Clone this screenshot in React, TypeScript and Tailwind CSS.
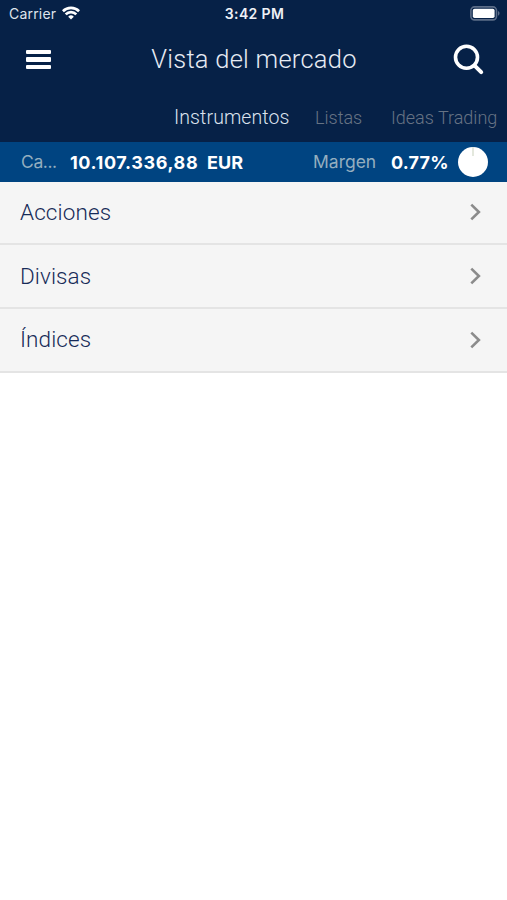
const instruments = ["Acciones", "Divisas", "Índices"];

function StatusBar() {
  return (
    <div className="grid h-[26px] grid-cols-3 items-center pl-[9px] pr-[7px] text-white">
      <div className="flex items-center gap-[6px]">
        <span className="text-[14px] tracking-[0.2px] text-[#dfe4ec]">Carrier</span>
        <svg width="18" height="14" viewBox="0 0 18 14" fill="none" stroke="currentColor" strokeWidth="2.7">
          <path d="M.9 5.2a11.5 11.5 0 0 1 16.2 0" />
          <path d="M3.7 8.4a7.5 7.5 0 0 1 10.6 0" />
          <path d="M9 13.6 6.2 10.7a4 4 0 0 1 5.6 0Z" fill="currentColor" stroke="none" />
        </svg>
      </div>
      <span className="text-center text-[14px] font-semibold tracking-[0.35px] text-[#eef1f6]">
        3:42 PM
      </span>
      <svg className="justify-self-end" width="30" height="15" viewBox="0 0 30 15" fill="none">
        <rect x=".9" y=".9" width="25.6" height="13" rx="3.6" stroke="#5c6d88" strokeWidth="1.6" />
        <rect x="2.8" y="2.7" width="21.8" height="9.4" rx="1.8" fill="#fff" />
        <path d="M28 5.1c2 .8 2 3.8 0 4.6Z" fill="#5c6d88" />
      </svg>
    </div>
  );
}

export default function App() {
  return (
    <div className="h-[900px] w-[507px] overflow-hidden bg-white font-['Inter',sans-serif]">
      <header className="h-[142px] bg-[#062147]">
        <StatusBar />

        <div className="flex h-[67px] items-center justify-between pl-[26px] pr-[22px]">
          <button className="flex w-[29px] flex-col gap-[3px]">
            <span className="h-[4.5px] w-[25px] rounded-[1px] bg-white" />
            <span className="h-[4.5px] w-[25px] rounded-[1px] bg-white" />
            <span className="h-[4.5px] w-[25px] rounded-[1px] bg-white" />
          </button>
          <h1 className="font-['Roboto',sans-serif] text-[25.5px] font-light tracking-[0.25px] text-[#e6ebf3]">
            Vista del mercado
          </h1>
          <svg width="32" height="32" viewBox="0 0 32 32" fill="none" stroke="#fff">
            <circle cx="13.5" cy="13.3" r="11" strokeWidth="3.6" />
            <path d="m21.6 21.6 6.6 6.6" strokeWidth="4" strokeLinecap="round" />
          </svg>
        </div>

        {/* Tabs */}
        <nav className="flex h-[50px] items-baseline pl-[174px] pt-[10px] font-['Roboto',sans-serif] text-[18px] text-[#667384]">
          <span className="w-[141px] text-[19.5px] font-[350] tracking-[0.1px] text-[#dce3ee]">Instrumentos</span>
          <span className="w-[76px] font-[350]">Listas</span>
          <span className="whitespace-nowrap font-[350]">Ideas Trading</span>
        </nav>
      </header>

      {/* Resumen de la cuenta */}
      <section className="flex h-[39.5px] items-center bg-[#004481] pl-[21px] text-[18px] text-white">
        <span className="w-[49px] pt-px text-[17.5px] tracking-[-0.4px] text-[#94aebf]">Ca...</span>
        <span className="w-[137px] pt-px font-[650] tracking-[0.6px]">10.107.336,88</span>
        <span className="w-[106px] pt-px font-[650] tracking-[0.1px]">EUR</span>
        <span className="w-[78px] pt-px text-[17.5px] text-[#94aebf]">Margen</span>
        <span className="w-[67px] pt-px font-[650] tracking-[0.2px]">0.77%</span>
        <svg width="30" height="30" viewBox="0 0 30 30">
          <circle cx="15" cy="15" r="15" fill="#fff" />
          <path d="M15 0v9" stroke="#d8dfcf" strokeWidth="1.4" />
        </svg>
      </section>

      <ul>
        {instruments.map((name) => (
          <li
            key={name}
            className="flex h-[63.7px] items-center justify-between border-b-2 border-[#e4e4e4] bg-[#f5f5f5] pl-5 pr-[26px]">
            <span className="pt-px font-['Roboto',sans-serif] text-[22.5px] font-[350] tracking-[0.1px] text-[#172b58]">
              {name}
            </span>
            <svg width="11" height="18" viewBox="0 0 11 18" fill="none" stroke="#8b8b8b" strokeWidth="2.6">
              <path d="m1.3 1.6 7.6 7.4-7.6 7.4" />
            </svg>
          </li>
        ))}
      </ul>
    </div>
  );
}
